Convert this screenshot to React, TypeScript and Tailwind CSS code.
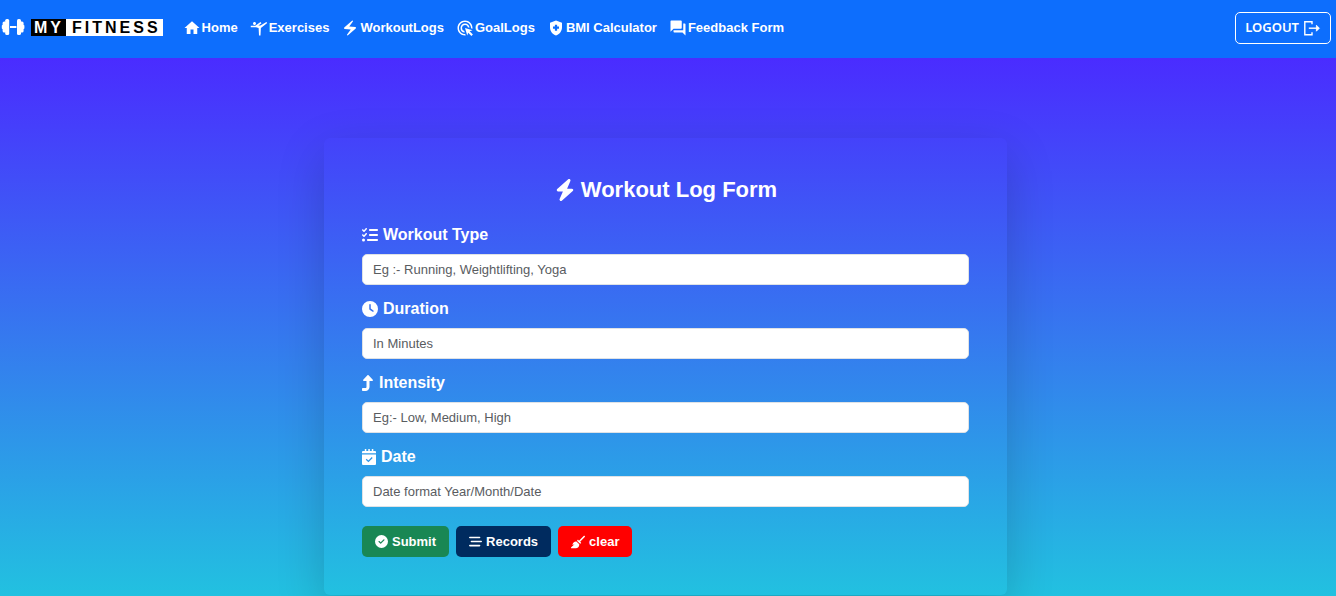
import type { ReactNode } from "react";
import { MdHome, MdSportsGymnastics, MdElectricBolt, MdAdsClick, MdHealthAndSafety, MdForum } from "react-icons/md";
import { FaListCheck, FaClock, FaBolt, FaTurnUp, FaBroom, FaCircleCheck, FaBarsStaggered } from "react-icons/fa6";

function DumbbellIcon() {
  return (
    <svg width="24" height="18" viewBox="0 0 24 18" fill="currentColor" aria-hidden="true">
      <rect x="4.2" y="1" width="4" height="16" rx="1.6" />
      <rect x="1.6" y="3.5" width="4" height="11" rx="1.6" />
      <rect x="0.8" y="7" width="2" height="4" rx="0.8" />
      <rect x="9" y="8" width="6.4" height="2" />
      <rect x="16" y="1" width="4" height="16" rx="1.6" />
      <rect x="18.6" y="3.5" width="4" height="11" rx="1.6" />
      <rect x="21.4" y="7" width="2" height="4" rx="0.8" />
    </svg>
  );
}

function LogoutIcon() {
  return (
    <svg width="18" height="16" viewBox="0 0 18 16" fill="none" stroke="currentColor" strokeWidth="1.4" aria-hidden="true">
      <path d="M9 4.2V1.7H1.8V14.8H9V12.3" />
      <path d="M5.8 8.2H15.5" />
      <path d="M13.4 5.2L16.4 8.2L13.4 11.2z" fill="currentColor" strokeWidth="0.8" />
    </svg>
  );
}

function CalendarIcon() {
  return (
    <svg width="14" height="16" viewBox="0 0 14 16" aria-hidden="true">
      <path
        fill="currentColor"
        d="M2.8 0h1.5v2h2V0h1.5v2h2V0h1.5v2H13a1 1 0 0 1 1 1v1.3H0V3a1 1 0 0 1 1-1h1.8zM0 5.4h14V15a1 1 0 0 1-1 1H1a1 1 0 0 1-1-1z"
      />
      <path d="M4.2 10.3l2.2 2.1 3.8-3.9" fill="none" stroke="#2b95e9" strokeWidth="1.3" />
    </svg>
  );
}

const links: { label: string; icon: ReactNode }[] = [
  { label: "Home", icon: <MdHome size={18} /> },
  { label: "Exercises", icon: <MdSportsGymnastics size={18} /> },
  { label: "WorkoutLogs", icon: <MdElectricBolt size={18} /> },
  { label: "GoalLogs", icon: <MdAdsClick size={18} /> },
  { label: "BMI Calculator", icon: <MdHealthAndSafety size={18} /> },
  { label: "Feedback Form", icon: <MdForum size={18} /> },
];

const fields: { id: string; label: string; placeholder: string; icon: ReactNode }[] = [
  { id: "type", label: "Workout Type", placeholder: "Eg :- Running, Weightlifting, Yoga", icon: <FaListCheck size={16} /> },
  { id: "duration", label: "Duration", placeholder: "In Minutes", icon: <FaClock size={16} /> },
  { id: "intensity", label: "Intensity", placeholder: "Eg:- Low, Medium, High", icon: <FaTurnUp className="h-4 w-3" /> },
  { id: "date", label: "Date", placeholder: "Date format Year/Month/Date", icon: <CalendarIcon /> },
];

export default function App() {
  return (
    <div className="flex min-h-screen flex-col bg-[#0d6efd] font-['Liberation_Sans',Arial,sans-serif] text-white">
      <header className="flex h-[58px] items-center pr-[5px] pb-0.5 pl-px">
        <a href="#home" className="flex items-center gap-1.5 pb-0.5 text-base leading-[17px] font-bold tracking-[3px]">
          <DumbbellIcon />
          <span className="flex">
            <span className="bg-black pr-0.5 pl-[3px]">MY</span>
            <span className="bg-white pr-0.5 pl-1.5 text-black">FITNESS</span>
          </span>
        </a>
        <nav className="ml-5 flex items-center gap-3 text-[13px] font-bold">
          {links.map((l) => (
            <a key={l.label} href="#" className="flex items-center gap-px">
              {l.icon}
              <span>{l.label}</span>
            </a>
          ))}
        </nav>
        <button
          type="button"
          className="ml-auto flex h-8 items-center gap-1 rounded-[5px] border border-white px-[9px] font-['Noto_Sans',sans-serif] text-[13px] font-semibold"
        >
          LOGOUT
          <LogoutIcon />
        </button>
      </header>

      <main className="flex-1 bg-linear-to-b/srgb from-[#4a2cff] to-[#22c1e0] pt-20 pr-[5px]">
        <form
          className="mx-auto w-full max-w-[683px] rounded-md p-[38px] shadow-[0_16px_48px_rgba(0,0,0,0.175)]"
          onSubmit={(e) => e.preventDefault()}
        >
          <h1 className="mb-[18px] flex items-center justify-center gap-[5px] text-[22px] leading-7 font-bold">
            <FaBolt size={22} />
            Workout Log Form
          </h1>
          <div className="flex flex-col gap-[11px]">
            {fields.map((f) => (
              <div key={f.id} className="flex flex-col gap-1.5">
                <label htmlFor={f.id} className="flex items-center gap-[5px] leading-[26px] font-bold">
                  {f.icon}
                  {f.label}
                </label>
                <input
                  id={f.id}
                  type="text"
                  placeholder={f.placeholder}
                  className="h-[31px] w-full rounded-[5px] border border-[#dee2e6] bg-white px-2.5 text-[13px] text-[#212529] placeholder:text-[#595c5f]"
                />
              </div>
            ))}
          </div>
          <div className="mt-[19px] flex gap-[7px] text-[13px] font-bold">
            <button type="submit" className="flex h-[31px] items-center gap-1 rounded-[5px] bg-[#198754] px-[13px]">
              <FaCircleCheck size={13} />
              Submit
            </button>
            <button type="button" className="flex h-[31px] items-center gap-1 rounded-[5px] bg-[#002b5f] px-[13px]">
              <FaBarsStaggered size={13} />
              Records
            </button>
            <button type="reset" className="flex h-[31px] items-center gap-1 rounded-[5px] bg-[#ff0000] px-[13px]">
              <FaBroom size={14} />
              clear
            </button>
          </div>
        </form>
      </main>
    </div>
  );
}
